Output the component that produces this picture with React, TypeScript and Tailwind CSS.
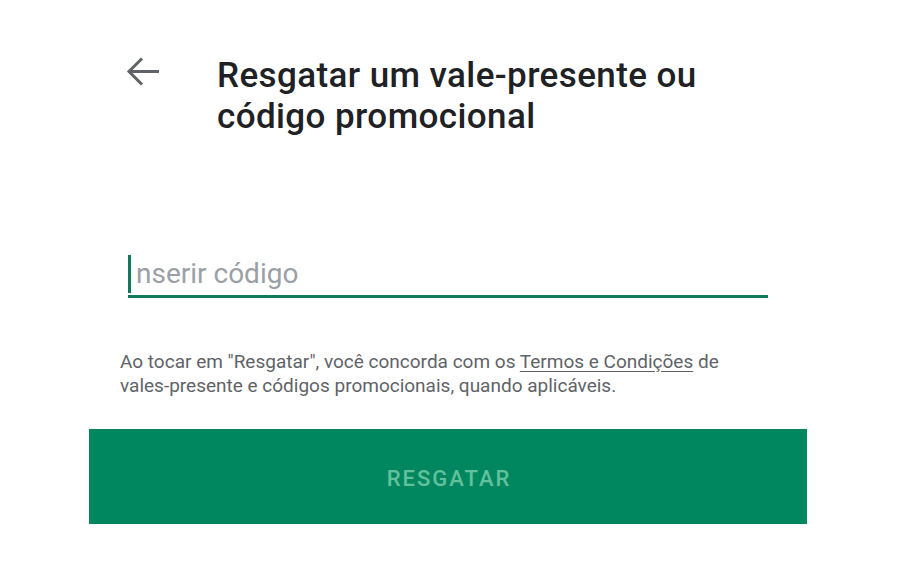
import React from 'react';

const BackArrow = () => (
  <svg width="34" height="32" viewBox="0 0 34 32" className="shrink-0">
    <path
      d="M3 15.5H33M16 2.5L3 15.5L16 28.5"
      fill="none"
      stroke="#5f6368"
      strokeWidth="3"
    />
  </svg>
);

export default function App() {
  return (
    <div className="w-full h-[572px] bg-white font-['Roboto','Liberation_Sans',sans-serif] overflow-hidden">
      {/* Header */}
      <div className="flex items-start pl-[126px] pt-[55px]">
        <button aria-label="Voltar" className="mt-[1px] p-0">
          <BackArrow />
        </button>
        <h1 className="ml-[57px] text-[35px] leading-[41px] font-medium text-[#202124] tracking-[0.4px] w-[560px]">
          Resgatar um vale-presente ou código promocional
        </h1>
      </div>

      {/* Code input */}
      <div className="ml-[128px] mt-[115px] w-[640px]">
        <div className="flex items-center h-[43px]">
          <span className="w-[3px] h-[38px] bg-[#0f7a5a]" />
          <input
            className="flex-1 ml-[5px] bg-transparent outline-none text-[28px] text-[#202124] placeholder:text-[#9aa0a6] leading-[38px]"
            placeholder="nserir código"
          />
        </div>
        <div className="h-[3px] bg-[#137a5c]" />
      </div>

      {/* Terms */}
      <p className="ml-[120px] mt-[52px] w-[620px] text-[19px] leading-[24px] text-[#5f6368]">
        Ao tocar em "Resgatar", você concorda com os{' '}
        <span className="underline underline-offset-[3px]">Termos e Condições</span> de
        vales-presente e códigos promocionais, quando aplicáveis.
      </p>

      {/* Redeem button */}
      <div className="ml-[89px] mt-[31px] w-[718px] h-[95px] bg-[#01875f] flex items-center justify-center">
        <span className="text-[22px] font-medium text-[#62c09a] tracking-[2px] pl-[2px] mt-[4px]">RESGATAR</span>
      </div>
    </div>
  );
}
